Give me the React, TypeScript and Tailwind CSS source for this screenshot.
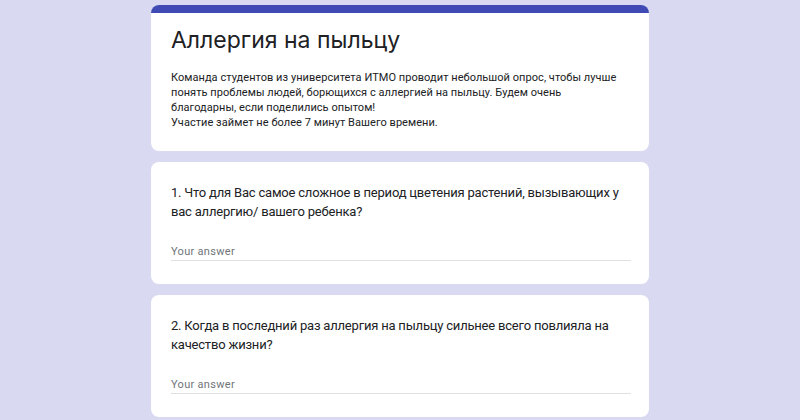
export default function App() {
  return (
    <div className="h-[420px] w-[800px] overflow-hidden bg-[#d9d9f1]">
      <div className="mx-auto flex w-[498px] flex-col gap-[11px] pt-[5px]">
        {/* Header card */}
        <div className="overflow-hidden rounded-lg bg-white">
          <div className="h-[8px] bg-[#3f4ab5]" />
          <div className="px-5 pb-[21px] pt-[11px]">
            <h1 className="font-['Inter',sans-serif] text-[23px] leading-[32px] text-[#202124]">
              Аллергия на пыльцу
            </h1>
            <p className="mt-[14px] font-['Roboto',sans-serif] text-[11px] leading-[15px] tracking-[0.05px] text-[#202124]">
              Команда студентов из университета ИТМО проводит небольшой опрос,
              чтобы лучше
              <br />
              понять проблемы людей, борющихся с аллергией на пыльцу. Будем
              очень
              <br />
              благодарны, если поделились опытом!
              <br />
              Участие займет не более 7 минут Вашего времени.
            </p>
          </div>
        </div>

        <Question text="1. Что для Вас самое сложное в период цветения растений, вызывающих у вас аллергию/ вашего ребенка?" />
        <Question text="2. Когда в последний раз аллергия на пыльцу сильнее всего повлияла на качество жизни?" />
      </div>
    </div>
  );
}

function Question({ text }: { text: string }) {
  return (
    <div className="rounded-lg bg-white px-5 pb-[23px] pt-[21px]">
      <p className="font-['Roboto',sans-serif] text-[13px] leading-[19px] tracking-[-0.2px] text-[#202124]">
        {text}
      </p>
      <div className="mt-[23px] w-[460px] border-b border-[#e0e0e0] font-['Roboto',sans-serif] text-[11px] leading-[16px] tracking-[0.3px] text-[#70757a]">
        Your answer
      </div>
    </div>
  );
}
